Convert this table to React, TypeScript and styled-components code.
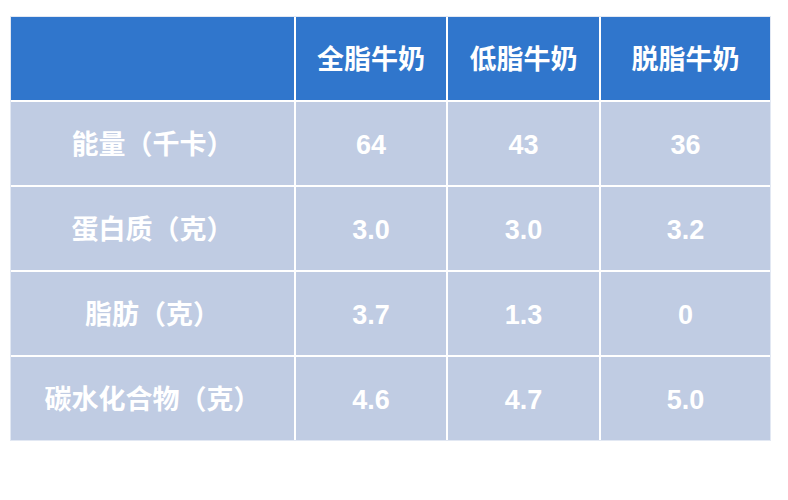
import React from "react";
import styled, { createGlobalStyle } from "styled-components";

const GlobalStyle = createGlobalStyle`
  html, body { margin: 0; padding: 0; background: #ffffff; }
  body { font-family: "Liberation Sans", "Noto Sans CJK SC", sans-serif; }
`;

const Page = styled.div`
  width: 788px;
  height: 500px;
  padding: 16px 0 0 10px;
  box-sizing: border-box;
  background: #ffffff;
`;

const Table = styled.div`
  width: 761px;
  box-sizing: border-box;
  border: 1px solid #e2e8f3;
  display: grid;
  grid-template-columns: 283px 150px 151px 169px;
  grid-auto-rows: 83px;
  gap: 2px;
  background: #ffffff;
`;

const Cell = styled.div<{ $head?: boolean }>`
  display: flex;
  align-items: center;
  justify-content: center;
  padding-top: 3px;
  box-sizing: border-box;
  background: ${(p) => (p.$head ? "#3076cc" : "#c0cce3")};
  color: #ffffff;
  font-family: "Liberation Sans", "Noto Sans CJK SC", sans-serif;
  font-weight: 700;
  font-size: 27px;
  line-height: 1;
`;

const headers = ["", "全脂牛奶", "低脂牛奶", "脱脂牛奶"];
const rows: string[][] = [
  ["能量（千卡）", "64", "43", "36"],
  ["蛋白质（克）", "3.0", "3.0", "3.2"],
  ["脂肪（克）", "3.7", "1.3", "0"],
  ["碳水化合物（克）", "4.6", "4.7", "5.0"],
];

export default function App() {
  return (
    <>
      <GlobalStyle />
      <Page>
        <Table>
          {headers.map((h, i) => (
            <Cell key={`h${i}`} $head>
              {h}
            </Cell>
          ))}
          {rows.map((r, ri) =>
            r.map((c, ci) => <Cell key={`${ri}-${ci}`}>{c}</Cell>)
          )}
        </Table>
      </Page>
    </>
  );
}
